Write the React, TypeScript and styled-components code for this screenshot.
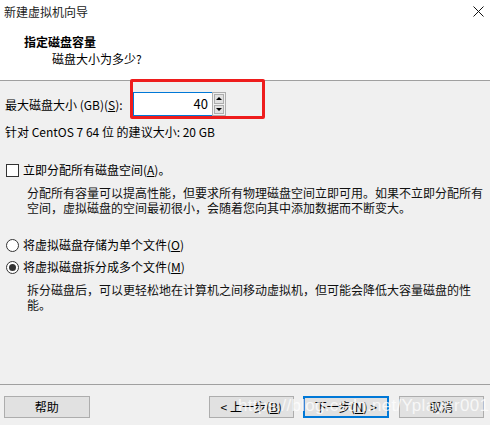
import styled, { createGlobalStyle } from "styled-components";

const GlobalStyle = createGlobalStyle`
  html, body {
    margin: 0;
    padding: 0;
    background: #f0f0f0;
  }
  body {
    font-family: "Noto Sans CJK SC", "Microsoft YaHei", sans-serif;
    font-size: 12px;
    color: #000;
  }
`;

const Window = styled.div`
  position: relative;
  width: 490px;
  height: 425px;
  display: flex;
  flex-direction: column;
  background: #f0f0f0;
  overflow: hidden;
`;

const Header = styled.div`
  height: 81px;
  background: #fff;
  border-bottom: 1px solid #a0a0a0;
  box-sizing: border-box;
  flex: none;
`;

const TitleBar = styled.div`
  height: 24px;
  display: flex;
  align-items: center;
  justify-content: space-between;
  padding: 0 6px 0 4px;
  color: #222;
  line-height: 24px;
`;

const CloseX = styled.svg`
  width: 11px;
  height: 11px;
  margin-top: -2px;
`;

const Heading = styled.div`
  margin: 9px 0 0 24px;
  font-weight: bold;
  line-height: 17px;
`;

const SubHeading = styled.div`
  margin-left: 52px;
  line-height: 17px;
`;

const Body = styled.div`
  padding: 11px 5px 0 5px;
  display: flex;
  flex-direction: column;
`;

const SizeRow = styled.div`
  display: flex;
  align-items: center;
  height: 24px;
`;

const Label = styled.span`
  width: 128px;
  flex: none;
  white-space: nowrap;
`;

const Mnemonic = styled.span`
  text-decoration: underline;
`;

const FieldWrap = styled.div`
  position: relative;
  display: flex;
  height: 24px;
`;

const Input = styled.div`
  width: 79px;
  height: 24px;
  box-sizing: border-box;
  border: 1px solid #0078d7;
  border-right: none;
  background: #fff;
  text-align: right;
  padding-right: 4px;
  line-height: 22px;
  font-size: 13px;
`;

const Spinner = styled.div`
  width: 14px;
  display: flex;
  flex-direction: column;
  border: 1px solid #adadad;
  box-sizing: border-box;
  background: #f0f0f0;
  padding: 1px;
  gap: 1px;
`;

const SpinButton = styled.div`
  flex: 1;
  background: #e1e1e1;
  border: 1px solid #adadad;
  display: flex;
  align-items: center;
  justify-content: center;
`;

const Arrow = styled.div<{ $down?: boolean }>`
  width: 0;
  height: 0;
  border-left: 3px solid transparent;
  border-right: 3px solid transparent;
  ${(p) =>
    p.$down ? "border-top: 3px solid #000;" : "border-bottom: 3px solid #000;"}
`;

const Highlight = styled.div`
  position: absolute;
  left: -3px;
  top: -13px;
  width: 135px;
  height: 40px;
  box-sizing: border-box;
  border: 3px solid #ee1c1c;
  border-radius: 2px;
  pointer-events: none;
`;

const Hint = styled.div`
  margin-top: 8px;
  line-height: 16px;
`;

const OptionRow = styled.div<{ $gap: number }>`
  display: flex;
  align-items: center;
  gap: 4px;
  margin-top: ${(p) => p.$gap}px;
  line-height: 16px;
`;

const CheckBox = styled.span`
  width: 13px;
  height: 13px;
  margin-left: 1px;
  box-sizing: border-box;
  border: 1px solid #333;
  background: #fff;
  flex: none;
`;

const Radio = styled.span<{ $checked?: boolean }>`
  width: 13px;
  height: 13px;
  margin-left: 1px;
  box-sizing: border-box;
  border: 1px solid #333;
  border-radius: 50%;
  background: #fff;
  flex: none;
  display: flex;
  align-items: center;
  justify-content: center;
  &::after {
    content: "";
    width: 7px;
    height: 7px;
    border-radius: 50%;
    background: ${(p) => (p.$checked ? "#333" : "transparent")};
  }
`;

const Description = styled.div`
  margin: 7px 0 0 22px;
  line-height: 15px;
  color: #111;
`;

const Footer = styled.div`
  margin-top: auto;
  border-top: 1px solid #a0a0a0;
  padding: 11px 6px 7px 4px;
  display: flex;
  align-items: center;
`;

const Button = styled.button<{ $primary?: boolean; $ml?: number }>`
  width: 86px;
  height: 22px;
  margin-left: ${(p) => p.$ml ?? 0}px;
  box-sizing: border-box;
  border: ${(p) => (p.$primary ? "2px solid #0078d7" : "1px solid #adadad")};
  background: #e1e1e1;
  font-family: inherit;
  font-size: 12px;
  color: #000;
  padding: 0;
  line-height: 18px;
`;

const Watermark = styled.div`
  position: absolute;
  left: 238px;
  top: 396px;
  font-family: "Liberation Sans", Arial, sans-serif;
  font-size: 17px;
  letter-spacing: 0.3px;
  color: rgba(255, 255, 255, 0.75);
  pointer-events: none;
  white-space: nowrap;
`;

export default function App() {
  return (
    <>
      <GlobalStyle />
      <Window>
        <Header>
          <TitleBar>
            <span>新建虚拟机向导</span>
            <CloseX viewBox="0 0 11 11">
              <path d="M0.5 0.5 L10.5 10.5 M10.5 0.5 L0.5 10.5" stroke="#111" strokeWidth="1" fill="none" />
            </CloseX>
          </TitleBar>
          <Heading>指定磁盘容量</Heading>
          <SubHeading>磁盘大小为多少?</SubHeading>
        </Header>

        <Body>
          <SizeRow>
            <Label>
              最大磁盘大小 (GB)(<Mnemonic>S</Mnemonic>):
            </Label>
            <FieldWrap>
              <Input>40</Input>
              <Spinner>
                <SpinButton>
                  <Arrow />
                </SpinButton>
                <SpinButton>
                  <Arrow $down />
                </SpinButton>
              </Spinner>
              <Highlight />
            </FieldWrap>
          </SizeRow>
          <Hint>针对 CentOS 7 64 位 的建议大小: 20 GB</Hint>

          <OptionRow $gap={22}>
            <CheckBox />
            <span>
              立即分配所有磁盘空间(<Mnemonic>A</Mnemonic>)。
            </span>
          </OptionRow>
          <Description>
            分配所有容量可以提高性能，但要求所有物理磁盘空间立即可用。如果不立即分配所有
            <br />
            空间，虚拟磁盘的空间最初很小，会随着您向其中添加数据而不断变大。
          </Description>

          <OptionRow $gap={22}>
            <Radio />
            <span>
              将虚拟磁盘存储为单个文件(<Mnemonic>O</Mnemonic>)
            </span>
          </OptionRow>
          <OptionRow $gap={6}>
            <Radio $checked />
            <span>
              将虚拟磁盘拆分成多个文件(<Mnemonic>M</Mnemonic>)
            </span>
          </OptionRow>
          <Description>
            拆分磁盘后，可以更轻松地在计算机之间移动虚拟机，但可能会降低大容量磁盘的性
            <br />
            能。
          </Description>
        </Body>

        <Footer>
          <Button>帮助</Button>
          <Button $ml={119}>&lt; 上一步(<Mnemonic>B</Mnemonic>)</Button>
          <Button $primary $ml={9}>
            下一步(<Mnemonic>N</Mnemonic>) &gt;
          </Button>
          <Button $ml={10}>取消</Button>
        </Footer>
        <Watermark>https://blog.csdn.net/Yplayer001</Watermark>
      </Window>
    </>
  );
}
